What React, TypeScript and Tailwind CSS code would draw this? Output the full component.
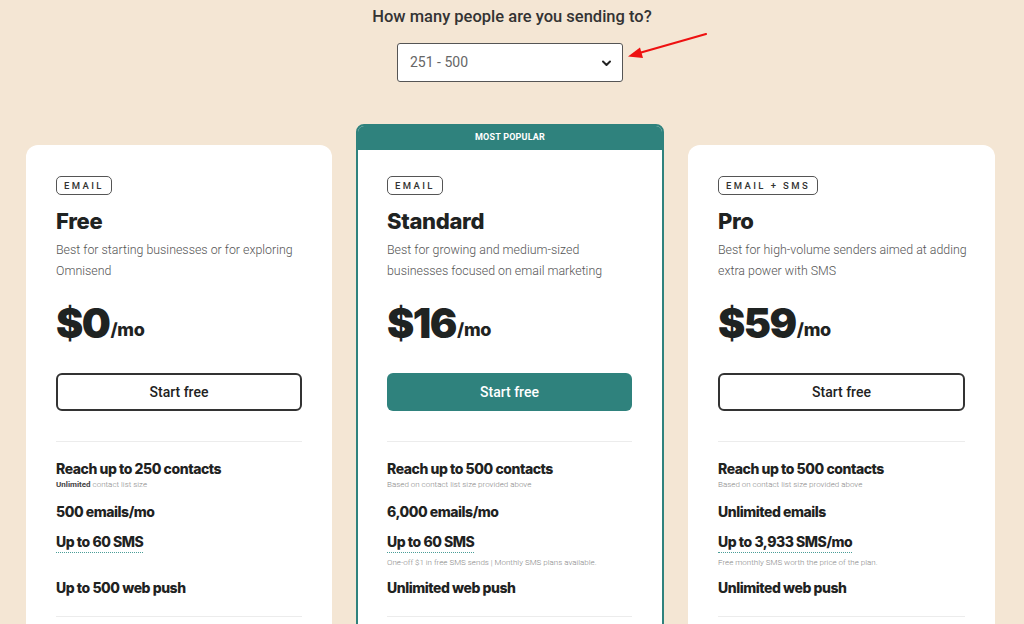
import React from "react";

const heavy = { fontFamily: "Inter, 'Noto Sans', sans-serif" };

type Plan = {
  badge: string;
  name: string;
  desc: [string, string];
  price: string;
  popular?: boolean;
  reach: string;
  reachSub: React.ReactNode;
  emails: string;
  sms: string;
  smsSub?: string;
  push: string;
};

const plans: Plan[] = [
  {
    badge: "EMAIL",
    name: "Free",
    desc: ["Best for starting businesses or for exploring", "Omnisend"],
    price: "$0",
    reach: "Reach up to 250 contacts",
    reachSub: (
      <>
        <span className="font-bold text-[#444]">Unlimited</span> contact list size
      </>
    ),
    emails: "500 emails/mo",
    sms: "Up to 60 SMS",
    push: "Up to 500 web push",
  },
  {
    badge: "EMAIL",
    name: "Standard",
    desc: ["Best for growing and medium-sized", "businesses focused on email marketing"],
    price: "$16",
    popular: true,
    reach: "Reach up to 500 contacts",
    reachSub: "Based on contact list size provided above",
    emails: "6,000 emails/mo",
    sms: "Up to 60 SMS",
    smsSub: "One-off $1 in free SMS sends | Monthly SMS plans available.",
    push: "Unlimited web push",
  },
  {
    badge: "EMAIL + SMS",
    name: "Pro",
    desc: ["Best for high-volume senders aimed at adding", "extra power with SMS"],
    price: "$59",
    reach: "Reach up to 500 contacts",
    reachSub: "Based on contact list size provided above",
    emails: "Unlimited emails",
    sms: "Up to 3,933 SMS/mo",
    smsSub: "Free monthly SMS worth the price of the plan.",
    push: "Unlimited web push",
  },
];

function CardBody({ p }: { p: Plan }) {
  const feat = "text-[14px] leading-[20px] font-extrabold text-[#1f2322] tracking-[-0.45px]";
  return (
    <div className={"flex flex-col pr-[30px] " + (p.popular ? "pl-[29px]" : "pl-[30px]")}>
      <div className="flex">
        <span className="h-[19px] px-[7px] flex items-center border border-[#555] rounded-[5px] text-[9.5px] font-medium tracking-[2.4px] text-[#333] leading-none" style={{ fontFamily: "Roboto, sans-serif" }}>
          {p.badge}
        </span>
      </div>
      <div className="mt-[12px] text-[22px] leading-[28px] font-extrabold text-[#1f2322] tracking-[-0.3px]" style={heavy}>
        {p.name}
      </div>
      <div className="mt-[4px] text-[12.4px] leading-[21px] font-light text-[#555] whitespace-nowrap" style={{ fontFamily: "Roboto, sans-serif" }}>
        <div>{p.desc[0]}</div>
        <div>{p.desc[1]}</div>
      </div>
      <div className="mt-[17px] h-[48px] flex items-end text-[#1f2322]" style={heavy}>
        <span className="text-[41px] leading-[46px] font-black tracking-[-1.5px]">{p.price}</span>
        <span className="text-[18px] leading-[18px] font-extrabold mb-[7px] ml-[1px] tracking-[-0.3px]">/mo</span>
      </div>
      <button
        className={
          "mt-[27px] h-[38px] rounded-[6px] text-[14px] font-medium " +
          (p.popular ? "bg-[#2f827d] text-white" : "border-2 border-[#333] text-[#222] bg-white")
        }
        style={{ fontFamily: "Roboto, sans-serif" }}
      >
        Start free
      </button>
      <div className="mt-[30px] h-px bg-[#ececec]" />
      <div className={"mt-[17px] " + feat} style={heavy}>
        {p.reach}
      </div>
      <div className="text-[8px] leading-[12px] text-[#888] font-light" style={{ fontFamily: "Roboto, sans-serif" }}>
        {p.reachSub}
      </div>
      <div className={"mt-[11px] " + feat} style={heavy}>
        {p.emails}
      </div>
      <div className="mt-[10px] h-[46px] flex flex-col items-start">
        <span className={feat + " leading-[19px] border-b border-dotted border-[#4a9e98]"} style={heavy}>
          {p.sms}
        </span>
        {p.smsSub && (
          <span className="mt-[4px] text-[8px] leading-[12px] text-[#888] font-light" style={{ fontFamily: "Roboto, sans-serif" }}>
            {p.smsSub}
          </span>
        )}
      </div>
      <div className={feat} style={heavy}>
        {p.push}
      </div>
      <div className="mt-[18px] h-px bg-[#ececec]" />
      <div className="h-[60px]" />
    </div>
  );
}

export default function App() {
  return (
    <div className="relative w-[1024px] h-[624px] overflow-hidden bg-[#f4e6d4]" style={{ fontFamily: "Roboto, sans-serif" }}>
      <div className="flex flex-col items-center">
        <div className="mt-[6px] text-[16.5px] leading-[22px] font-medium text-[#333]">How many people are you sending to?</div>
        <div className="mt-[15px] mr-[4px] w-[226px] h-[39px] bg-white border border-[#555] rounded-[3px] flex items-center justify-between pl-[12px] pr-[10px]">
          <span className="text-[14px] text-[#666]">251 - 500</span>
          <svg width="11" height="8" viewBox="0 0 11 8">
            <path d="M2 2.5 L5.5 6 L9 2.5" stroke="#222" strokeWidth="2" fill="none" strokeLinecap="round" strokeLinejoin="round" />
          </svg>
        </div>
      </div>

      <svg className="absolute left-[620px] top-[28px]" width="95" height="36" viewBox="0 0 95 36">
        <line x1="86" y1="6" x2="14" y2="26.5" stroke="#ee1111" strokeWidth="2.2" strokeLinecap="round" />
        <path d="M8 28.5 L20 19.5 L23 30 Z" fill="#ee1111" />
      </svg>

      <div className="mt-[42px] flex items-start pl-[26px] gap-[24px]">
        <div className="mt-[21px] w-[306px] bg-white rounded-[12px] pt-[31px]">
          <CardBody p={plans[0]} />
        </div>
        <div className="w-[308px] rounded-[8px] border-2 border-[#2f827d] bg-white overflow-hidden">
          <div className="h-[24px] bg-[#2f827d] flex items-center justify-center text-white text-[9px] font-bold tracking-[0.2px]">
            MOST POPULAR
          </div>
          <div className="pt-[26px]">
            <CardBody p={plans[1]} />
          </div>
        </div>
        <div className="mt-[21px] w-[307px] bg-white rounded-[12px] pt-[31px]">
          <CardBody p={plans[2]} />
        </div>
      </div>
    </div>
  );
}
